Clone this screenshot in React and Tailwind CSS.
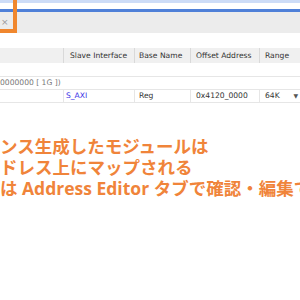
export default function App() {
  const ui = { fontFamily: '"DejaVu Sans", sans-serif' };
  const jp = { fontFamily: '"Open Sans", "Noto Sans CJK JP", sans-serif' };
  return (
    <div className="relative w-[300px] h-[300px] overflow-hidden bg-white" style={ui}>
      {/* top window bands */}
      <div className="h-[3px] bg-[#cddcf7]" />
      <div className="h-[6px] bg-white" />
      <div className="h-[3px] bg-[#4f80d8]" />
      <div className="h-[21px] bg-[#ececec] flex items-center pl-[1px]">
        <span className="text-[9px] leading-none text-[#9a9a9a]">×</span>
      </div>
      <div className="h-[15px]" />
      {/* table header */}
      <div className="grid grid-cols-[64px_71px_56px_69px_40px] h-[15px] bg-[#f0f0f0] text-[7.6px] text-[#333] leading-[15px]">
        <div className="border-r border-[#d9d9d9]" />
        <div className="border-r border-[#d9d9d9] pl-[6px] whitespace-nowrap">Slave Interface</div>
        <div className="border-r border-[#d9d9d9] pl-[4px] whitespace-nowrap">Base Name</div>
        <div className="border-r border-[#d9d9d9] pl-[5px] whitespace-nowrap">Offset Address</div>
        <div className="pl-[5px] whitespace-nowrap">Range</div>
      </div>
      <div className="h-[14px] border-b border-[#e6e6e6]" />
      <div className="h-[13px] border-b border-[#e6e6e6] text-[7.6px] text-[#777] leading-[12px] whitespace-nowrap">
        0000000 [ 1G ])
      </div>
      <div className="grid grid-cols-[64px_71px_56px_69px_40px] h-[13px] border-b border-[#e6e6e6] text-[7.6px] text-[#333] leading-[12px]">
        <div className="border-r border-[#e6e6e6]" />
        <div className="border-r border-[#e6e6e6] pl-[2px] text-[#3b33e6]">S_AXI</div>
        <div className="border-r border-[#e6e6e6] pl-[4px]">Reg</div>
        <div className="border-r border-[#e6e6e6] pl-[5px] whitespace-nowrap">0x4120_0000</div>
        <div className="pl-[5px] flex items-center justify-between pr-[2px]">
          <span>64K</span>
          <span className="text-[6px] text-[#555]">▼</span>
        </div>
      </div>
      {/* annotation text */}
      <div className="mt-[33px] text-[17.5px] leading-[21px] font-bold text-[#f0843a] whitespace-nowrap" style={jp}>
        <div>ンス生成したモジュールは</div>
        <div>ドレス上にマップされる</div>
        <div>は Address Editor タブで確認・編集できる</div>
      </div>
      {/* orange highlight box over tab */}
      <div className="absolute left-[-41px] top-[-10px] w-[58px] h-[43px] border-4 border-[#f0872e]" />
    </div>
  );
}
